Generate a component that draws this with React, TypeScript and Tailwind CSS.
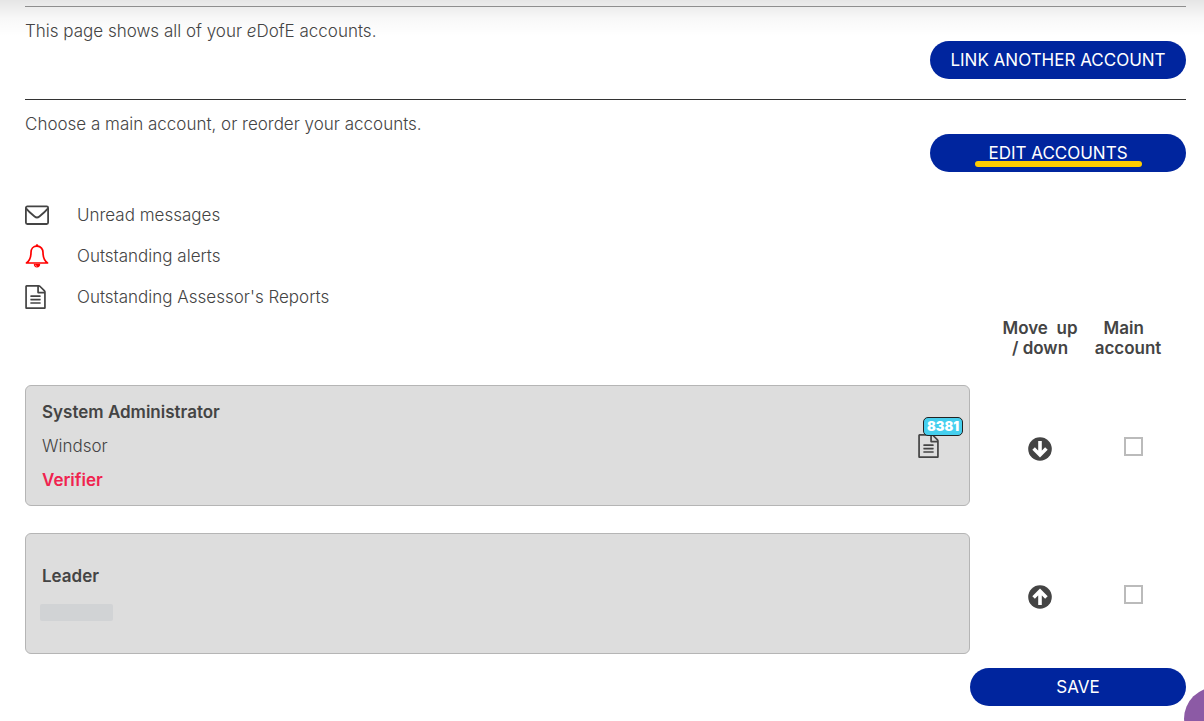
import { useState } from "react";

const EnvelopeIcon = () => (
  <svg className="w-6 h-6" viewBox="0 0 24 24" fill="none" stroke="currentColor" strokeWidth="1.8" aria-hidden="true">
    <rect x="0.9" y="3.4" width="22.2" height="17.6" rx="1.4" />
    <path d="M1 5.400c2.600 3.200 5.600 5.700 8.600 8.100 1.700 1.400 3.100 1.400 4.800 0 3-2.400 6-4.900 8.600-8.100" />
  </svg>
);

const BellIcon = () => (
  <svg className="w-6 h-6" viewBox="0 0 24 24" fill="none" stroke="currentColor" aria-hidden="true">
    <path
      d="M12 2.200c-4 0-6 2.900-6 6.300 0 5.500-1.500 8.300-4.500 10.500h21c-3-2.200-4.500-5-4.500-10.500 0-3.400-2-6.300-6-6.300z"
      strokeWidth="1.700"
      strokeLinejoin="round"
    />
    <circle cx="12" cy="1.500" r="1.300" fill="currentColor" stroke="none" />
    <path d="M8.800 20h6.400a3.200 3.400 0 0 1-6.400 0z" fill="currentColor" stroke="none" />
    <path d="M10.300 20.700a1.900 1.900 0 0 0 1.600 1.700" stroke="white" strokeWidth="0.500" />
  </svg>
);

const ReportIcon = () => (
  <svg className="w-[21px] h-6" viewBox="0 0 1536 1792" fill="currentColor" aria-hidden="true">
    <path d="M1468 380q28 28 48 76t20 88v1152q0 40-28 68t-68 28H96q-40 0-68-28t-28-68V96q0-40 28-68T96 0h896q40 0 88 20t76 48zM1024 136v376h376q-10-29-22-41l-313-313q-12-12-41-22zm384 1528V640H992q-40 0-68-28t-28-68V128H128v1536h1280zM384 800q0-14 9-23t23-9h704q14 0 23 9t9 23v64q0 14-9 23t-23 9H416q-14 0-23-9t-9-23v-64zm736 224q14 0 23 9t9 23v64q0 14-9 23t-23 9H416q-14 0-23-9t-9-23v-64q0-14 9-23t23-9h704zm0 256q14 0 23 9t9 23v64q0 14-9 23t-23 9H416q-14 0-23-9t-9-23v-64q0-14 9-23t23-9h704z" />
  </svg>
);

const ArrowIcon = ({ direction }: { direction: string }) => (
  <svg className="w-6 h-6" viewBox="0 0 24 24" fill="none" aria-hidden="true">
    <circle cx="12" cy="12" r="11.800" fill="currentColor" />
    <path
      d={direction === "down" ? "M12 4v13M5.600 11.600l6.400 6.400 6.400-6.400" : "M12 20V7M5.600 12.400L12 6l6.400 6.400"}
      stroke="white"
      strokeWidth="3.600"
    />
  </svg>
);

const legend = [
  { label: "Unread messages", icon: <EnvelopeIcon /> },
  { label: "Outstanding alerts", icon: <BellIcon />, color: "text-[#ff0000]" },
  { label: "Outstanding Assessor's Reports", icon: <ReportIcon /> },
];

const accounts = [
  { role: "System Administrator", place: "Windsor", status: "Verifier", reports: 8381, move: "down" },
  { role: "Leader", place: "", status: "", reports: 0, move: "up" },
];

const pill = "h-[38px] rounded-full bg-[#00259e] text-white uppercase font-normal cursor-pointer";

const App = () => {
  const [mainAccount, setMainAccount] = useState("");

  return (
    <div className="relative bg-white pt-1.5 pb-3 pl-[25px] pr-[18px] font-['Inter',sans-serif] text-[17px] leading-5 font-light text-[#444444]">
      {/* Shadow from the site header */}
      <div className="absolute inset-x-0 top-0 h-9 bg-linear-to-b from-black/10 via-black/3 to-transparent pointer-events-none" />

      <section className="border-t border-[#999999] pt-3.5 pb-5">
        <p>
          This page shows all of your <em>e</em>DofE accounts.
        </p>
        <div className="flex justify-end">
          <button type="button" className={`${pill} w-64`}>
            Link another account
          </button>
        </div>
      </section>

      <section className="border-t border-[#333333] pt-3.5">
        <p>Choose a main account, or reorder your accounts.</p>
        <div className="flex justify-end">
          <button type="button" className={`${pill} relative w-64`}>
            Edit accounts
            <span className="absolute left-[45px] bottom-[5px] w-[167px] h-1.5 rounded-full bg-[#ffcc00]" />
          </button>
        </div>
      </section>

      <ul className="mt-[22px] mb-px">
        {legend.map((item) => (
          <li key={item.label} className="flex items-center h-[41px]">
            <span className={`w-[52px] ${item.color ?? ""}`}>{item.icon}</span>
            {item.label}
          </li>
        ))}
      </ul>

      {/* Column headings */}
      <div className="flex justify-end pr-3.5 text-center font-semibold">
        <div className="w-[88px]">
          Move&nbsp; up
          <br />/ down
        </div>
        <div className="w-[88px]">
          Main&nbsp;&nbsp;
          <br />
          account
        </div>
      </div>

      <div className="mt-[27px] space-y-[27px]">
        {accounts.map((account) => (
          <div key={account.role} className="flex">
            <div className="flex-1 flex items-center justify-between min-h-[121px] px-4 border border-[#b5b5b5] rounded-md bg-[#dddddd]">
              <div className="flex flex-col gap-3.5">
                <h2 className="font-semibold">{account.role}</h2>
                {account.place ? (
                  <p>{account.place}</p>
                ) : (
                  <div className="-ml-0.5 mt-1 w-[73px] h-[17px] rounded-xs bg-[#d1d3d5]" />
                )}
                {account.status && <p className="font-semibold text-[#f0234f]">{account.status}</p>}
              </div>
              {account.reports > 0 && (
                <div className="relative mr-3.5">
                  <ReportIcon />
                  <span className="absolute left-[5px] -top-[17px] flex items-center justify-center w-10 h-[19px] border border-[#222222] rounded-[5px] bg-[#45cfee] text-[13px] font-black text-white">
                    {account.reports}
                  </span>
                </div>
              )}
            </div>
            <div className="flex items-center w-54 pl-[26px] pr-3.5">
              <div className="flex justify-center w-[88px] pt-1.5">
                <button type="button" aria-label={`Move ${account.role} ${account.move}`} className="cursor-pointer">
                  <ArrowIcon direction={account.move} />
                </button>
              </div>
              <div className="flex justify-center w-[88px] pt-0.5 pl-2.5">
                <input
                  type="checkbox"
                  aria-label={`Set ${account.role} as main account`}
                  checked={mainAccount === account.role}
                  onChange={(e) => setMainAccount(e.target.checked ? account.role : "")}
                  className="appearance-none w-[19px] h-[19px] border-2 border-[#bbbbbb] bg-white checked:bg-[#00259e]"
                />
              </div>
            </div>
          </div>
        ))}
      </div>

      <div className="flex justify-end mt-3.5">
        <button type="button" className={`${pill} w-54`}>
          Save
        </button>
      </div>

      {/* Chat launcher */}
      <button
        type="button"
        aria-label="Open chat"
        className="fixed -right-11 -bottom-[30px] w-16 h-16 rounded-full bg-[#8c5aa5] cursor-pointer"
      />
    </div>
  );
};

export default App;
